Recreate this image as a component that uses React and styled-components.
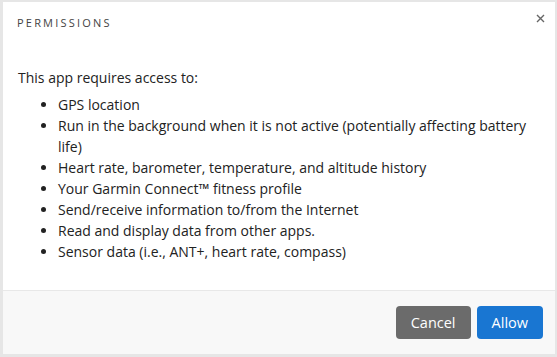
import React from "react";
import styled, { createGlobalStyle } from "styled-components";

const permissions = [
  "GPS location",
  "Run in the background when it is not active (potentially affecting battery life)",
  "Heart rate, barometer, temperature, and altitude history",
  "Your Garmin Connect™ fitness profile",
  "Send/receive information to/from the Internet",
  "Read and display data from other apps.",
  "Sensor data (i.e., ANT+, heart rate, compass)",
];

function App() {
  return (
    <>
      <GlobalStyle />
      <Dialog>
        <Header>
          <Title>Permissions</Title>
          <CloseButton aria-label="Close">
            <svg width="9" height="9" viewBox="0 0 9 9">
              <path
                d="M1 1 L8 8 M8 1 L1 8"
                stroke="#666"
                strokeWidth="1.4"
                fill="none"
              />
            </svg>
          </CloseButton>
        </Header>
        <Body>
          <Intro>This app requires access to:</Intro>
          <List>
            {permissions.map((p) => (
              <li key={p}>{p}</li>
            ))}
          </List>
        </Body>
        <Footer>
          <Button variant="cancel">Cancel</Button>
          <Button variant="primary">Allow</Button>
        </Footer>
      </Dialog>
    </>
  );
}

export default App;

const GlobalStyle = createGlobalStyle`
  html, body {
    margin: 0;
    background: #e6e6e6;
  }
  body {
    padding: 2px 2px 3px 3px;
    font-family: "Open Sans", "Liberation Sans", sans-serif;
    color: #222;
  }
`;

const Dialog = styled.div`
  width: 552px;
  height: 352px;
  background: #fff;
  display: flex;
  flex-direction: column;
`;

const Header = styled.div`
  display: flex;
  justify-content: space-between;
  align-items: flex-start;
  padding: 13px 10px 0 14px;
`;

const Title = styled.h2`
  margin: 0;
  font-size: 11px;
  line-height: 16px;
  font-weight: 400;
  letter-spacing: 2.2px;
  text-transform: uppercase;
  color: #444;
`;

const CloseButton = styled.button`
  border: none;
  background: none;
  padding: 0;
  margin-top: -1px;
  cursor: pointer;
  display: flex;
`;

const Body = styled.div`
  flex: 1;
  padding: 36px 15px 0 15px;
  font-size: 14px;
  line-height: 21px;
`;

const Intro = styled.p`
  margin: 0 0 6px;
`;

const List = styled.ul`
  margin: 0;
  padding-left: 40px;
`;

const Footer = styled.div`
  height: 63px;
  border-top: 1px solid #e8e8e8;
  background: #f8f8f8;
  display: flex;
  justify-content: flex-end;
  align-items: center;
  gap: 6px;
  padding: 0 12px;
`;

const Button = styled.button`
  height: 33px;
  padding: 0 15px;
  border: none;
  border-radius: 4px;
  font-family: "Open Sans", "Liberation Sans", sans-serif;
  font-size: 14.5px;
  color: #fff;
  background: ${(p) => (p.variant === "primary" ? "#1976d2" : "#6b6b6b")};
  cursor: pointer;
`;
